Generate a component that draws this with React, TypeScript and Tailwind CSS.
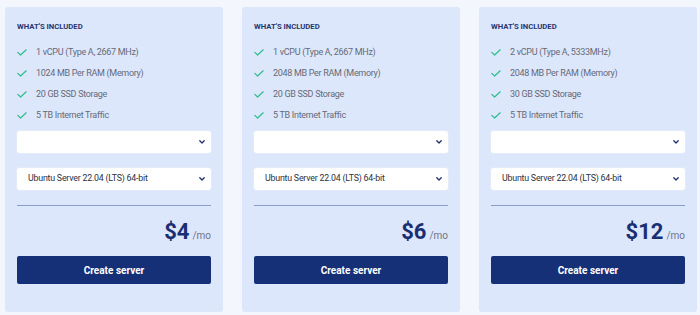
import React from "react";

type Plan = { features: string[]; price: string };

const plans: Plan[] = [
  {
    features: ["1 vCPU (Type A, 2667 MHz)", "1024 MB Per RAM (Memory)", "20 GB SSD Storage", "5 TB Internet Traffic"],
    price: "$4",
  },
  {
    features: ["1 vCPU (Type A, 2667 MHz)", "2048 MB Per RAM (Memory)", "20 GB SSD Storage", "5 TB Internet Traffic"],
    price: "$6",
  },
  {
    features: ["2 vCPU (Type A, 5333MHz)", "2048 MB Per RAM (Memory)", "30 GB SSD Storage", "5 TB Internet Traffic"],
    price: "$12",
  },
];

function Check() {
  return (
    <svg width="10" height="7" viewBox="0 0 10 7" className="shrink-0">
      <path d="M0.8 3.4 L3.6 6 L9.2 0.8" fill="none" stroke="#2ebd8c" strokeWidth="1.2" strokeLinecap="round" strokeLinejoin="round" />
    </svg>
  );
}

function Chevron() {
  return (
    <svg width="6" height="4" viewBox="0 0 6 4" className="shrink-0">
      <path d="M0.8 0.8 L3 3 L5.2 0.8" fill="none" stroke="#1f2f6e" strokeWidth="1.3" strokeLinecap="round" strokeLinejoin="round" />
    </svg>
  );
}

function Select({ label }: { label?: string }) {
  return (
    <div className="flex h-[22px] items-center justify-between rounded-[3px] bg-white pl-[11px] pr-[6px] shadow-[0_0_0_1px_#e4ebf8]">
      <span className="text-[8.8px] tracking-[-0.2px] text-[#2b3142]">{label ?? ""}</span>
      <Chevron />
    </div>
  );
}

function Card({ plan }: { plan: Plan }) {
  return (
    <div className="flex h-[305px] w-[218px] flex-col rounded-[3px] bg-[#dde7fb] px-3 pt-[15px]">
      <div className="text-[7.7px] font-bold leading-[10px] text-[#26356e]">WHAT'S INCLUDED</div>
      <div className="mt-[10px] flex flex-col">
        {plan.features.map((f) => (
          <div key={f} className="flex h-[21px] items-center gap-[9px]">
            <Check />
            <span className="text-[9px] tracking-[-0.3px] text-[#656a78]">{f}</span>
          </div>
        ))}
      </div>
      <div className="mt-[5px]">
        <Select />
      </div>
      <div className="mt-[15px]">
        <Select label="Ubuntu Server 22.04 (LTS) 64-bit" />
      </div>
      <div className="mt-[15px] h-px bg-[#8d9dcb]" />
      <div className="mt-[12px] flex items-baseline justify-end gap-[3px]">
        <span className="text-[22px] font-bold leading-[28px] text-[#1a2f73]">{plan.price}</span>
        <span className="text-[10px] text-[#6e7486]">/mo</span>
      </div>
      <button className="mt-[10px] flex h-[28px] items-center justify-center rounded-[2px] bg-[#163078] text-[10px] font-bold text-white">
        Create server
      </button>
    </div>
  );
}

export default function App() {
  return (
    <div className="h-[315px] w-[700px] bg-[#f3f6fd] pl-[5px] pt-[7px]" style={{ fontFamily: "Roboto, 'Liberation Sans', sans-serif" }}>
      <div className="flex gap-[19px]">
        {plans.map((p, i) => (
          <Card key={i} plan={p} />
        ))}
      </div>
    </div>
  );
}
